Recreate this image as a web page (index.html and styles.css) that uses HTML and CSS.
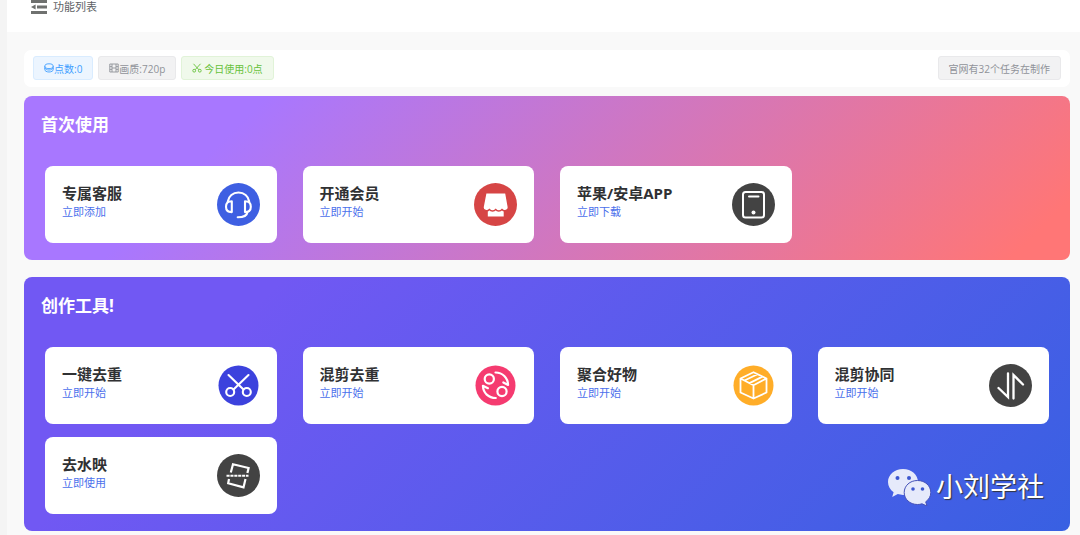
FILE: index.html
```html
<!DOCTYPE html>
<html lang="zh-CN">
<head>
    <meta charset="UTF-8">
    <meta name="viewport" content="width=device-width, initial-scale=1.0">
    <title>功能列表</title>
    <link rel="stylesheet" href="styles.css">
</head>
<body>
    <div class="page">
        <header class="header">
            <button class="fold-btn" type="button" aria-label="折叠菜单">
                <svg width="16" height="14" viewBox="0 0 16 14" fill="#6f716f">
                    <path d="M0 0h16v3H0zM6 5.500h10v3H6zM0 11h16v3H0zM0 7l4.600-2.600v5.200z"/>
                </svg>
            </button>
            <span>功能列表</span>
        </header>

        <main class="main">
            <div class="stats">
                <span class="tag tag-blue">
                    <svg width="10" height="10" viewBox="0 0 10 10" fill="none" stroke="currentColor" stroke-width="0.9">
                        <ellipse cx="5" cy="3.2" rx="4.2" ry="2.4"/>
                        <path d="M0.8 3.2v3.4C0.8 8 2.6 9 5 9s4.2-1 4.2-2.4V3.2M0.8 5C1.4 6.4 3 7 5 7s3.6-.6 4.2-2"/>
                    </svg>点数:0
                </span>
                <span class="tag tag-gray">
                    <svg width="10" height="10" viewBox="0 0 10 10" fill="none" stroke="currentColor" stroke-width="0.9">
                        <path d="M0.8 1h8.4v8H0.8zM3 1v8M7 1v8M3 5h4M0.8 3.6H3M0.8 6.4H3M7 3.6h2.2M7 6.4h2.2"/>
                    </svg>画质:720p
                </span>
                <span class="tag tag-green">
                    <svg class="spaced" width="10" height="10" viewBox="0 0 10 10" fill="none" stroke="currentColor" stroke-width="0.9">
                        <path d="M1.5 0.8l5.4 6M8.5 0.8l-5.4 6"/>
                        <circle cx="2.2" cy="7.7" r="1.4"/>
                        <circle cx="7.8" cy="7.7" r="1.4"/>
                    </svg>今日使用:0点
                </span>
                <span class="tag tag-gray tag-right">官网有32个任务在制作</span>
            </div>

            <section class="panel panel-first">
                <h2>首次使用</h2>
                <div class="cards">
                    <a class="card" href="#">
                        <span class="card-text"><strong>专属客服</strong><span class="action">立即添加</span></span>
                        <svg class="icon" viewBox="0 0 43 43" fill="none" stroke="#fff" stroke-width="2.1" stroke-linecap="round">
                            <circle cx="21.5" cy="21.5" r="21.5" fill="#3e5fe2" stroke="none"/>
                            <path d="M10.800 18.500C11.500 13 16 9.500 21.500 9.500S31.500 13 32.200 18.500"/>
                            <path d="M14.800 18.300v10.800c-3.700 0-5.800-2-5.800-5.400s2.100-5.400 5.800-5.400zM28 18.300v10.800c3.700 0 5.800-2 5.800-5.400s-2.100-5.400-5.800-5.400z" stroke-linejoin="round"/>
                            <path d="M30.500 29c-.5 3.500-4 5.300-9.800 5.300"/>
                        </svg>
                    </a>
                    <a class="card" href="#">
                        <span class="card-text"><strong>开通会员</strong><span class="action">立即开始</span></span>
                        <svg class="icon" viewBox="0 0 43 43" fill="#fff">
                            <circle cx="21.5" cy="21.5" r="21.5" fill="#d64545"/>
                            <path d="M13.800 27h15.900v6.500H13.800z"/>
                            <path stroke="#d64545" stroke-width="1.4" d="M11.800 9.800h20l2.600 14.500c0 3.400-4.500 4.500-6.400 2.200-1.600 2-4.700 2-6.300 0-1.600 2-4.700 2-6.300 0-1.900 2.300-6.400 1.200-6.400-2.200z"/>
                        </svg>
                    </a>
                    <a class="card" href="#">
                        <span class="card-text"><strong>苹果/安卓APP</strong><span class="action">立即下载</span></span>
                        <svg class="icon" viewBox="0 0 43 43" fill="none" stroke="#fff" stroke-width="2">
                            <circle cx="21.5" cy="21.5" r="21.5" fill="#434343" stroke="none"/>
                            <rect x="11" y="9" width="21" height="25.5" rx="2.5"/>
                            <path d="M17 13.500h9.500" stroke-linecap="round"/>
                            <circle cx="21.5" cy="29.5" r="2" fill="#fff" stroke="none"/>
                        </svg>
                    </a>
                </div>
            </section>

            <section class="panel panel-tools">
                <h2>创作工具!</h2>
                <div class="cards">
                    <a class="card" href="#">
                        <span class="card-text"><strong>一键去重</strong><span class="action">立即开始</span></span>
                        <svg class="icon" viewBox="0 0 43 43" fill="none" stroke="#fff" stroke-width="2.1" stroke-linecap="round">
                            <circle cx="21.5" cy="21.5" r="20" fill="#3c42dd" stroke="none"/>
                            <path d="M11.500 11l15 14.500M31.500 11l-15 14.500"/>
                            <circle cx="13.2" cy="28" r="4"/>
                            <circle cx="29.8" cy="28" r="4"/>
                        </svg>
                    </a>
                    <a class="card" href="#">
                        <span class="card-text"><strong>混剪去重</strong><span class="action">立即开始</span></span>
                        <svg class="icon" viewBox="0 0 43 43" fill="none" stroke="#fff" stroke-width="2.2" stroke-linecap="round" stroke-linejoin="round">
                            <circle cx="21.5" cy="21.5" r="20" fill="#f53b70" stroke="none"/>
                            <circle cx="15.3" cy="15" r="4.6"/>
                            <circle cx="28" cy="27.5" r="4.6"/>
                            <path d="M21.500 8.500c7 .2 12.300 5 12.600 12.500l-4.800-2.500"/>
                            <path d="M21.800 34C14.500 34 9.200 29 8.900 21.800l5 2.400"/>
                        </svg>
                    </a>
                    <a class="card" href="#">
                        <span class="card-text"><strong>聚合好物</strong><span class="action">立即开始</span></span>
                        <svg class="icon" viewBox="0 0 43 43" fill="none" stroke="#fff" stroke-width="1.8" stroke-linejoin="round">
                            <circle cx="21.5" cy="21.5" r="20" fill="#ffad28" stroke="none"/>
                            <path d="M21.500 8.200L34.500 14.500v14L21.500 34.500 8.500 28.500v-14zM8.500 14.500l13 6.800 13-6.800M21.500 21.300v13M12.500 16.500L25.500 10.200M17.500 19.100l13-6.500"/>
                        </svg>
                    </a>
                    <a class="card" href="#">
                        <span class="card-text"><strong>混剪协同</strong><span class="action">立即开始</span></span>
                        <svg class="icon" viewBox="0 0 43 43" fill="none" stroke="#fff" stroke-width="2.3" stroke-linecap="round">
                            <circle cx="21.5" cy="21.5" r="21.5" fill="#434343" stroke="none"/>
                            <path d="M19 9.500v23.500L9.500 24M24.500 34.500V11l9.500 9.500"/>
                        </svg>
                    </a>
                    <a class="card" href="#">
                        <span class="card-text"><strong>去水映</strong><span class="action">立即使用</span></span>
                        <svg class="icon" viewBox="0 0 43 43" fill="none" stroke="#fff" stroke-width="2.2">
                            <circle cx="21.5" cy="21.5" r="21.5" fill="#434343" stroke="none"/>
                            <path d="M13.800 18.500L16 10.200l15.600 3.800-1.200 5M12 25l-.8 4.200 15.300 4.200 2-8.400"/>
                            <path d="M9.500 21.700h22" stroke-width="2" stroke-dasharray="3.1 .8"/>
                        </svg>
                    </a>
                </div>
            </section>
        </main>
    </div>

    <div class="watermark">
        <svg width="44" height="38" viewBox="0 0 44 38">
            <path fill="#e6eafb" d="M16 1C7.500 1 1 6.800 1 14c0 4.200 2.200 7.700 5.600 10.200L5.200 29l5.600-2.900c1.700.5 3.400.8 5.200.8 8.500 0 15-5.800 15-12.900S24.500 1 16 1z"/>
            <path fill="#e6eafb" stroke="#4350b8" stroke-width="1" d="M30.500 12.500c-7.600 0-13.300 5.300-13.300 12s5.700 12 13.300 12c1.600 0 3-.2 4.500-.7l5 2.200-1.300-4.200c3.200-2.300 5.100-5.500 5.100-9.300 0-6.700-5.700-12-13.300-12z"/>
            <g fill="#3d57cf">
                <circle cx="10.5" cy="10" r="2"/>
                <circle cx="22" cy="10" r="2"/>
                <circle cx="26" cy="21" r="1.8"/>
                <circle cx="35.5" cy="21" r="1.8"/>
            </g>
        </svg>
        <span>小刘学社</span>
    </div>
</body>
</html>
```

FILE: styles.css
```css
* {
    margin: 0;
    padding: 0;
    box-sizing: border-box;
}

body {
    font-family: "Open Sans", "Noto Sans CJK SC", sans-serif;
    font-size: 11px;
    background: #f9f9f9;
    color: #303133;
    position: relative;
}

.page {
    border-left: 7px solid #f4f4f4;
}

.header {
    display: flex;
    align-items: center;
    gap: 6px;
    height: 32px;
    padding: 0 24px 18px;
    background: #fff;
    color: #606266;
    line-height: 14px;
}

.fold-btn {
    display: flex;
    border: none;
    background: none;
    cursor: pointer;
}

.main {
    padding: 18px 10px 4px 17px;
}

.stats {
    display: flex;
    align-items: center;
    gap: 5px;
    padding: 6px 9px 7px;
    margin-bottom: 9px;
    background: #fff;
    border-radius: 7px;
}

.tag {
    display: flex;
    align-items: center;
    height: 24px;
    padding: 0 10px;
    border: 1px solid;
    border-radius: 3px;
    font-size: 10px;
    white-space: nowrap;
}

.tag .spaced {
    margin-right: 2px;
}

.tag-blue {
    color: #409eff;
    background: #ecf5ff;
    border-color: #d9ecff;
}

.tag-gray {
    color: #909399;
    background: #f2f2f3;
    border-color: #e9e9eb;
}

.tag-green {
    color: #67c23a;
    background: #f0f9eb;
    border-color: #e1f3d8;
}

.tag-right {
    margin-left: auto;
}

.panel {
    padding: 17px;
    border-radius: 8px;
}

.panel + .panel {
    margin-top: 17px;
}

.panel-first {
    background: linear-gradient(135deg, #a877ff 20%, #ff7676 95%);
}

.panel-tools {
    background: linear-gradient(135deg, #7158f3 20%, #3860e2 100%);
}

h2 {
    margin-bottom: 29px;
    font-size: 17px;
    line-height: 24px;
    color: #fff;
}

.cards {
    display: grid;
    grid-template-columns: repeat(4, 1fr);
    gap: 13px 26px;
    padding: 0 4px;
}

.card {
    display: flex;
    justify-content: space-between;
    padding: 17px;
    background: #fff;
    border-radius: 8px;
    color: #303133;
    text-decoration: none;
}

.card strong {
    display: block;
    font-size: 15px;
    line-height: 20px;
}

.card .action {
    display: block;
    line-height: 18px;
    color: #4b70ec;
}

.icon {
    width: 43px;
    height: 43px;
}

/* floats over the bottom corner of the last panel */
.watermark {
    position: absolute;
    right: 36px;
    bottom: 29px;
    display: flex;
    align-items: center;
    gap: 5px;
    font-size: 27px;
    line-height: 38px;
    color: #fff;
    text-shadow: 1px 1px 1px #30343f;
}
```
